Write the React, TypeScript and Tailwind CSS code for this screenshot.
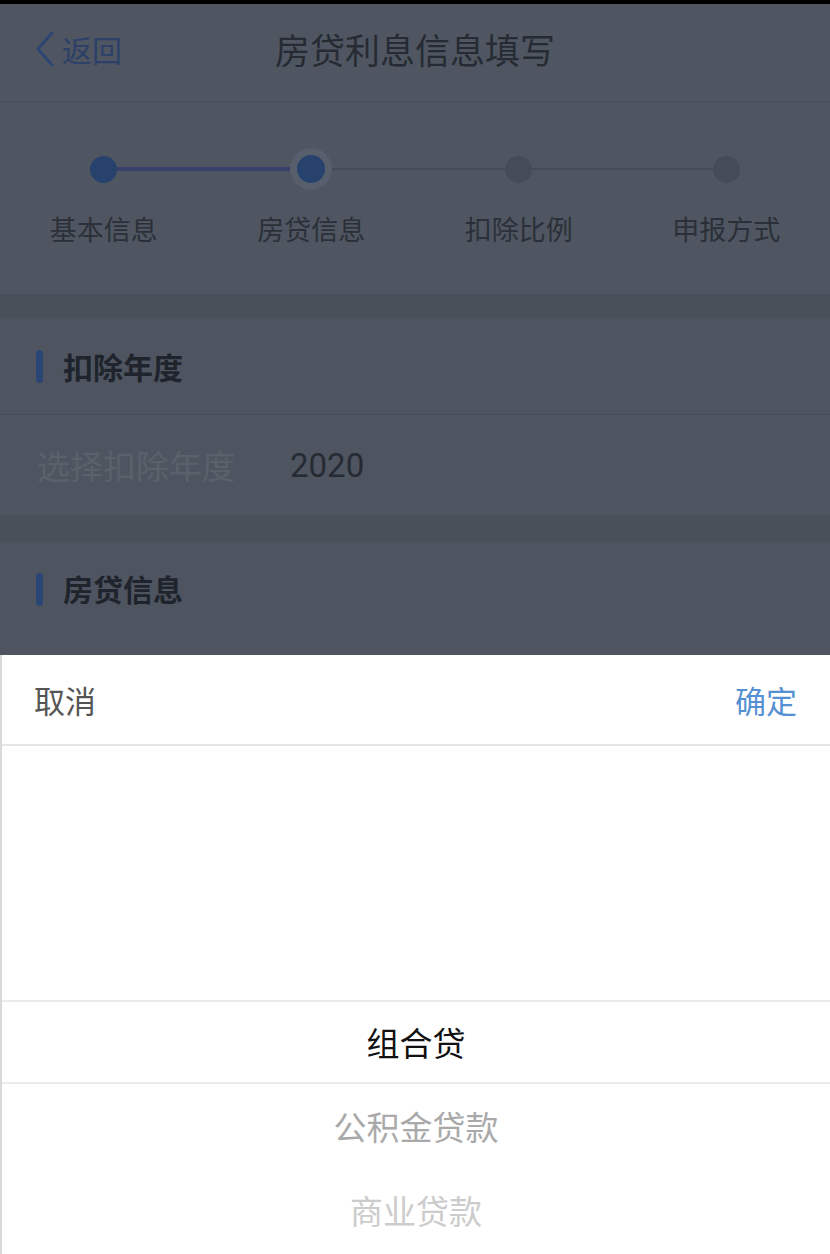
import React from "react";

const STEPS = ["基本信息", "房贷信息", "扣除比例", "申报方式"];
const CURRENT = 1;

export default function App() {
  return (
    <div className="relative flex h-[1254px] w-[830px] flex-col overflow-hidden bg-[#4e5560] font-['Noto_Sans_CJK_SC','Noto_Sans',sans-serif]">
      <div className="h-[4px] shrink-0 bg-black" />

      <header className="grid h-[98px] shrink-0 grid-cols-[1fr_auto_1fr] items-center border-b border-[#474d57] bg-[#4f5661] pb-[8px]">
        <div className="flex items-center pl-[34px] text-[30px] text-[#2c4068]">
          <svg width="22" height="36" viewBox="0 0 22 36" fill="none" className="mr-[6px]">
            <path d="M18 2 L4 18 L18 34" stroke="#2c4571" strokeWidth="3" strokeLinecap="round" strokeLinejoin="round" />
          </svg>
          <span className="leading-none">返回</span>
        </div>
        <h1 className="text-[35px] leading-none text-[#262b33]">房贷利息信息填写</h1>
        <div />
      </header>

      <Stepper />

      <div className="h-[24px] shrink-0 bg-[#4a505a]" />

      <SectionTitle className="h-[96px]">扣除年度</SectionTitle>

      <div className="flex h-[101px] shrink-0 items-center border-t border-[#484e58] bg-[#4e5560] pl-[37px] text-[33px] leading-none">
        <span className="w-[253px] text-[#5a616b]">选择扣除年度</span>
        <span className="font-['Roboto',sans-serif] text-[#262b33]">2020</span>
      </div>

      <div className="h-[27px] shrink-0 bg-[#4a505a]" />

      <SectionTitle className="h-[113px] items-start pt-[31px]">房贷信息</SectionTitle>

      <Sheet />
    </div>
  );
}

function Stepper() {
  return (
    <div className="flex h-[192px] shrink-0 bg-[#4f5661] pt-[47px]">
      {STEPS.map((label, i) => (
        <div key={label} className="flex w-1/4 flex-col items-center">
          <div className="relative flex h-[40px] w-full items-center justify-center">
            {i > 0 && (
              <div
                className={
                  i <= CURRENT
                    ? "absolute left-0 right-1/2 top-1/2 h-[4px] -translate-y-1/2 bg-[#38416b]"
                    : "absolute left-0 right-1/2 top-1/2 h-[2px] -translate-y-1/2 bg-[#454b55]"
                }
              />
            )}
            {i < STEPS.length - 1 && (
              <div
                className={
                  i < CURRENT
                    ? "absolute left-1/2 right-0 top-1/2 h-[4px] -translate-y-1/2 bg-[#38416b]"
                    : "absolute left-1/2 right-0 top-1/2 h-[2px] -translate-y-1/2 bg-[#454b55]"
                }
              />
            )}
            {i === CURRENT ? (
              <div className="relative flex h-[42px] w-[42px] items-center justify-center rounded-full bg-[#575e6c]">
                <div className="h-[28px] w-[28px] rounded-full bg-[#27436d]" />
              </div>
            ) : (
              <div
                className={
                  i < CURRENT
                    ? "relative h-[27px] w-[27px] rounded-full bg-[#27436d]"
                    : "relative h-[27px] w-[27px] rounded-full bg-[#464c57]"
                }
              />
            )}
          </div>
          <span className="mt-[26px] text-[27px] leading-none text-[#2b3038]">{label}</span>
        </div>
      ))}
    </div>
  );
}

function SectionTitle({ children, className = "" }: { children: string; className?: string }) {
  return (
    <div className={`flex shrink-0 items-center bg-[#4e5560] pl-[36px] ${className}`}>
      <span className="mr-[20px] h-[33px] w-[7px] rounded-full bg-[#2a4675]" />
      <span className="text-[30px] font-bold leading-none text-[#1f242c]">{children}</span>
    </div>
  );
}

function Sheet() {
  return (
    <div className="flex flex-1 flex-col border-l-2 border-[#d9d9d9] bg-white">
      <div className="flex h-[91px] shrink-0 items-center justify-between border-b-2 border-[#e6e6e6] pl-[32px] pr-[33px] text-[31px] leading-none">
        <span className="text-[#555555]">取消</span>
        <span className="text-[#5590d2]">确定</span>
      </div>
      <div className="flex flex-col pt-[254px] text-center text-[33px] leading-none">
        <div className="flex h-[84px] items-center justify-center border-y-2 border-[#ebebeb] text-[#111111]">组合贷</div>
        <div className="flex h-[84px] items-center justify-center text-[#a9a9a9]">公积金贷款</div>
        <div className="flex h-[84px] items-center justify-center text-[#cccccc]">商业贷款</div>
      </div>
    </div>
  );
}
